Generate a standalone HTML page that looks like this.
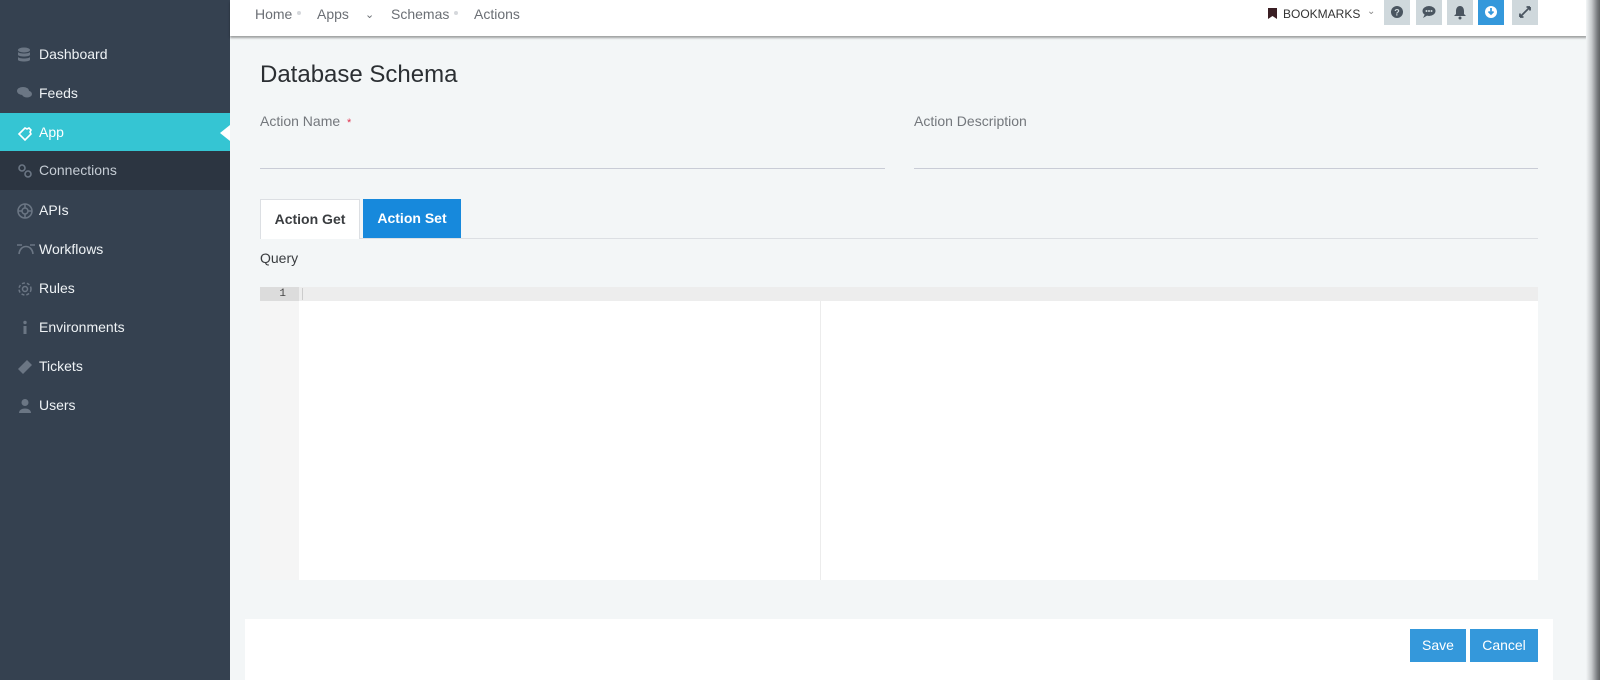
<!DOCTYPE html>
<html><head><meta charset="utf-8"><style>
*{box-sizing:border-box;margin:0;padding:0}
body{width:1600px;height:680px;overflow:hidden;background:#f3f6f7;font-family:"Liberation Sans",Arial,sans-serif;position:relative}
.sb{position:absolute;left:0;top:0;width:230px;height:680px;background:#354150}
.it{position:absolute;left:0;width:230px;height:39px;color:#eef2f5;font-size:14px;line-height:39px;padding-left:39px}
.it svg{position:absolute;left:17px;top:12px}
.act{background:#35c5d3;color:#fff}
.dk{background:#2c3541;color:#c5ccd4}
.tri{position:absolute;right:0;top:12px;width:0;height:0;border-top:8px solid transparent;border-bottom:8px solid transparent;border-right:10px solid #fff}
.top{position:absolute;left:230px;top:0;width:1357px;height:36px;background:#fff;box-shadow:0 2px 2px rgba(0,0,0,.35)}
.bc{position:absolute;top:6px;font-size:14px;color:#6b6f75}
.dot{position:absolute;top:11px;width:4px;height:4px;border-radius:50%;background:#d5d8dc}
.ib{position:absolute;top:0;width:26px;height:25px;background:#cfd8dc}
.rs{position:absolute;right:0;top:0;width:14px;height:680px;background:linear-gradient(to right,#f3f6f7,#c8cbcd 40%,#7a7d80 80%,#5e6163)}
h1{position:absolute;left:260px;top:61px;font-size:24px;font-weight:normal;color:#2b2f33}
.lbl{position:absolute;top:113px;font-size:14px;color:#73777c}
.ln{position:absolute;top:168px;height:1px;background:#c9ccd6}
.tab{position:absolute;top:199px;height:40px;font-size:14px;font-weight:bold;line-height:38px;text-align:center}
</style></head><body>
<div class="sb">
<div class="it" style="top:35px"><svg width="14" height="16" viewBox="0 0 14 16"><g fill="#6b7684"><ellipse cx="7" cy="3" rx="6" ry="2.5"/><path d="M1 5c1 2 11 2 12 0v3c-1 2-11 2-12 0z"/><path d="M1 10c1 2 11 2 12 0v3c-1 2-11 2-12 0z"/></g></svg>Dashboard</div>
<div class="it" style="top:74px"><svg width="16" height="14" viewBox="0 0 16 14"><g fill="#6b7684"><ellipse cx="6" cy="5" rx="6" ry="4"/><ellipse cx="10" cy="8" rx="5" ry="3.5"/></g></svg>Feeds</div>
<div class="it act" style="top:113px"><svg width="16" height="16" viewBox="0 0 16 16"><path d="M2 9l6-6 2 1 2-1 2 2-1 2 1 2-6 6z" fill="none" stroke="#fff" stroke-width="1.6"/></svg>App<div class="tri"></div></div>
<div class="it dk" style="top:151px"><svg width="16" height="16" viewBox="0 0 16 16"><g fill="none" stroke="#6b7684" stroke-width="1.6"><circle cx="5" cy="5" r="3"/><circle cx="11" cy="11" r="3"/></g></svg>Connections</div>
<div class="it" style="top:191px"><svg width="16" height="16" viewBox="0 0 16 16"><g fill="none" stroke="#6b7684" stroke-width="1.5"><circle cx="8" cy="8" r="7"/><circle cx="8" cy="8" r="3"/><path d="M8 1v4M8 11v4M1 8h4M11 8h4"/></g></svg>APIs</div>
<div class="it" style="top:230px"><svg width="18" height="14" viewBox="0 0 18 14"><path d="M2 12C3 2 15 2 16 12" fill="none" stroke="#6b7684" stroke-width="1.6"/><path d="M0 3h5M13 3h5" stroke="#6b7684" stroke-width="1.6"/></svg>Workflows</div>
<div class="it" style="top:269px"><svg width="16" height="16" viewBox="0 0 16 16"><g fill="none" stroke="#6b7684" stroke-width="1.5"><circle cx="8" cy="8" r="2.5"/><circle cx="8" cy="8" r="6" stroke-dasharray="3 2"/></g></svg>Rules</div>
<div class="it" style="top:308px"><svg width="16" height="16" viewBox="0 0 16 16"><g fill="#6b7684"><circle cx="8" cy="2.5" r="1.7"/><rect x="6.5" y="6" width="3" height="8"/></g></svg>Environments</div>
<div class="it" style="top:347px"><svg width="16" height="16" viewBox="0 0 16 16"><path d="M1 10l9-9 5 5-9 9z" fill="#6b7684"/></svg>Tickets</div>
<div class="it" style="top:386px"><svg width="16" height="16" viewBox="0 0 16 16"><g fill="#6b7684"><circle cx="8" cy="4.5" r="3.5"/><path d="M2 15c0-6 12-6 12 0z"/></g></svg>Users</div>
</div>
<div class="top">
<span class="bc" style="left:25px">Home</span><div class="dot" style="left:67px"></div>
<span class="bc" style="left:87px">Apps</span><span class="bc" style="left:135px;font-size:11px;top:8px">&#8964;</span>
<span class="bc" style="left:161px">Schemas</span><div class="dot" style="left:224px"></div>
<span class="bc" style="left:244px">Actions</span>
<svg style="position:absolute;left:1038px;top:8px" width="9" height="11"><path d="M0 0h9v11L4.5 8 0 11z" fill="#3a1f24"/></svg>
<span style="position:absolute;left:1053px;top:7px;font-size:12px;color:#333">BOOKMARKS</span>
<span style="position:absolute;left:1137px;top:6px;font-size:10px;color:#888">&#8964;</span>
<div class="ib" style="left:1154px"><svg width="26" height="25"><circle cx="13" cy="12" r="6" fill="#4a5560"/><text x="13" y="15.5" font-size="9" font-weight="bold" fill="#cfd8dc" text-anchor="middle" font-family="Liberation Sans">?</text></svg></div>
<div class="ib" style="left:1186px"><svg width="26" height="25"><ellipse cx="13" cy="11" rx="6.5" ry="5" fill="#4a5560"/><path d="M9 14l-2 4 5-3z" fill="#4a5560"/><g fill="#cfd8dc"><circle cx="10.5" cy="11" r="1"/><circle cx="13" cy="11" r="1"/><circle cx="15.5" cy="11" r="1"/></g></svg></div>
<div class="ib" style="left:1217px"><svg width="26" height="25"><path d="M13 6c-3 0-4 3-4 5v3l-2 2h12l-2-2v-3c0-2-1-5-4-5z" fill="#4a5560"/><circle cx="13" cy="18" r="1.5" fill="#4a5560"/></svg></div>
<div class="ib" style="left:1248px;background:#3498db"><svg width="26" height="25"><circle cx="13" cy="12" r="6" fill="#fff"/><path d="M13 8v6M10.5 11.5L13 14l2.5-2.5" stroke="#3498db" stroke-width="1.7" fill="none"/></svg></div>
<div class="ib" style="left:1282px"><svg width="26" height="25"><path d="M8 17l10-10M8 17v-3.5M8 17h3.5M18 7v3.5M18 7h-3.5" stroke="#4a5560" stroke-width="1.8" fill="none"/></svg></div>
</div>
<h1>Database Schema</h1>
<div class="lbl" style="left:260px">Action Name <span style="color:#e0334f;font-size:11px;margin-left:3px">*</span></div>
<div class="lbl" style="left:914px">Action Description</div>
<div class="ln" style="left:260px;width:625px"></div>
<div class="ln" style="left:914px;width:624px"></div>
<div style="position:absolute;left:260px;top:238px;width:1278px;height:1px;background:#dcdfe3"></div>
<div class="tab" style="left:260px;width:100px;background:#fff;border:1px solid #dcdfe3;border-bottom:none;color:#3a3d40">Action Get</div>
<div class="tab" style="left:363px;width:98px;background:#1789dc;color:#fff;height:39px">Action Set</div>
<div style="position:absolute;left:260px;top:250px;font-size:14px;color:#3a3d40">Query</div>
<div style="position:absolute;left:260px;top:287px;width:1278px;height:293px;background:#fff">
<div style="position:absolute;left:0;top:0;width:39px;height:293px;background:#f5f5f5"></div>
<div style="position:absolute;left:0;top:0;width:1278px;height:14px;background:#ededed"></div>
<div style="position:absolute;left:0;top:0;width:39px;height:14px;background:#dcdcdc;font-family:'Liberation Mono',monospace;font-size:11px;color:#444;text-align:right;padding-right:13px;line-height:14px">1</div>
<div style="position:absolute;left:42px;top:1px;width:1px;height:12px;background:#ccc"></div>
<div style="position:absolute;left:560px;top:14px;width:1px;height:279px;background:#ececec"></div>
</div>
<div style="position:absolute;left:245px;top:619px;width:1308px;height:61px;background:#fff"></div>
<div style="position:absolute;left:1410px;top:629px;width:56px;height:33px;background:#3498db;color:#fff;font-size:14px;line-height:33px;text-align:center">Save</div>
<div style="position:absolute;left:1470px;top:629px;width:68px;height:33px;background:#3498db;color:#fff;font-size:14px;line-height:33px;text-align:center">Cancel</div>
<div class="rs"></div>
</body></html>
